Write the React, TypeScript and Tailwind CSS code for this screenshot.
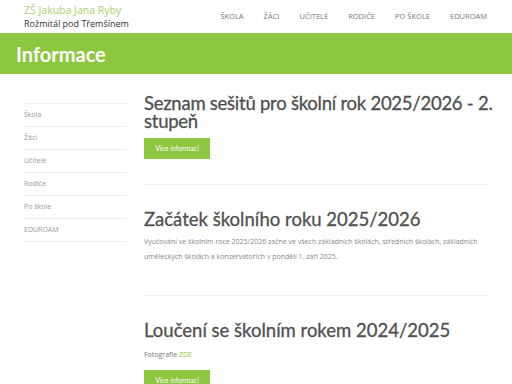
const NAV = ["Škola", "Žáci", "Učitelé", "Rodiče", "Po škole", "EDUROAM"];

function MoreButton() {
  return (
    <a
      href="#"
      className="flex h-[21px] w-[66px] items-center justify-center bg-[#8dc63f] text-[7px] text-white"
    >
      Více informací
    </a>
  );
}

export default function App() {
  return (
    <div className="h-[384px] w-[512px] overflow-hidden bg-white font-['Open_Sans',sans-serif]">
      <header className="flex h-[33px] items-center justify-between pl-6 pr-[25px]">
        <div className="flex flex-col leading-none">
          <span className="text-[10.5px] text-[#a9d06e]">ZŠ Jakuba Jana Ryby</span>
          <span className="mt-[3px] text-[9px] text-[#333]">Rožmitál pod Třemšínem</span>
        </div>
        <nav className="flex gap-[20px] text-[7.5px] uppercase text-[#777]">
          {NAV.map((item) => (
            <span key={item}>{item}</span>
          ))}
        </nav>
      </header>

      <div className="flex h-[41px] items-center bg-[#8dc63f] px-4">
        <h1 className="font-['Lato',sans-serif] text-[20px] font-bold text-white">Informace</h1>
      </div>

      <div className="flex gap-[17px] px-6 pt-[29px]">
        <aside className="w-[103px] shrink-0 border-t border-[#eee]">
          {NAV.map((item) => (
            <div
              key={item}
              className="flex h-[23px] items-center border-b border-[#eee] text-[7px] text-[#999]"
            >
              {item}
            </div>
          ))}
        </aside>

        <main className="w-[344px] font-['Lato',sans-serif] text-[#505050]">
          <article className="border-b border-[#f0f0f0] pb-[25px]">
            <h2 className="-mr-4 -mt-[9px] text-[18.5px] leading-[18px] tracking-[-0.25px] [-webkit-text-stroke:0.3px_#505050]">
              Seznam sešitů pro školní rok 2025/2026 - 2. stupeň
            </h2>
            <div className="mt-[8px]">
              <MoreButton />
            </div>
          </article>

          <article className="border-b border-[#f0f0f0] pb-[31px] pt-[24px]">
            <h2 className="text-[18.5px] leading-[20px] [-webkit-text-stroke:0.3px_#505050]">
              Začátek školního roku 2025/2026
            </h2>
            <p className="mt-[6px] font-['Open_Sans',sans-serif] text-[7px] leading-[14.5px] text-[#888]">
              Vyučování ve školním roce 2025/2026 začne ve všech základních školách, středních školách, základních
              uměleckých školách a konzervatořích v pondělí 1. září 2025.
            </p>
          </article>

          <article className="pt-[24px]">
            <h2 className="text-[18.5px] leading-[20px] [-webkit-text-stroke:0.3px_#505050]">
              Loučení se školním rokem 2024/2025
            </h2>
            <p className="mt-[10px] font-['Open_Sans',sans-serif] text-[7px] text-[#777]">
              Fotografie <a href="#" className="text-[#8dc63f]">ZDE</a>
            </p>
            <div className="mt-[9px]">
              <MoreButton />
            </div>
          </article>
        </main>
      </div>
    </div>
  );
}
